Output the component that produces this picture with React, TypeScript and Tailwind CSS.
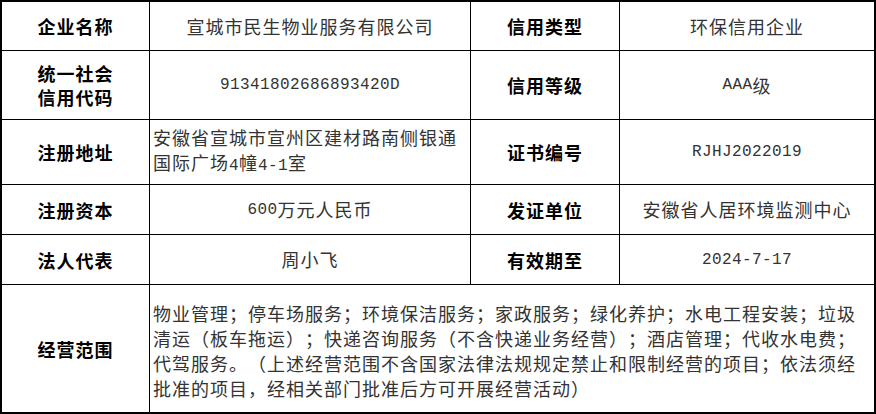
import React from 'react';

const M: React.FC<{ children: React.ReactNode }> = ({ children }) => (
    <span className="font-['Liberation_Mono',monospace] text-[16px] tracking-[0.4px]">{children}</span>
);

const Label: React.FC<{ children: React.ReactNode }> = ({ children }) => (
    <div className="flex items-center justify-center bg-white text-center text-[18px] leading-[24px] tracking-[1px] font-bold text-black">
        <div>{children}</div>
    </div>
);

const Value: React.FC<{ children: React.ReactNode }> = ({ children }) => (
    <div className="flex items-center justify-center bg-white text-center text-[18px] tracking-[1px] text-[#333] whitespace-nowrap">
        {children}
    </div>
);

const scopeLines = [
    '物业管理；停车场服务；环境保洁服务；家政服务；绿化养护；水电工程安装；垃圾',
    '清运（板车拖运）；快递咨询服务（不含快递业务经营）；酒店管理；代收水电费；',
    '代驾服务。（上述经营范围不含国家法律法规规定禁止和限制经营的项目；依法须经',
    '批准的项目，经相关部门批准后方可开展经营活动）',
];

export default function App() {
    return (
        <div className="w-[876px] h-[414px] bg-white font-['Noto_Sans_CJK_SC',sans-serif] [text-spacing-trim:space-all]">
            <div className="grid grid-cols-[147px_320px_148px_254px] grid-rows-[48px_68px_64px_49px_49px_127px] gap-px w-[876px] h-[414px] bg-black border-2 border-black">
                <Label>企业名称</Label>
                <Value>宣城市民生物业服务有限公司</Value>
                <Label>信用类型</Label>
                <Value>环保信用企业</Value>

                <Label>
                    统一社会
                    <br />
                    信用代码
                </Label>
                <Value><M>91341802686893420D</M></Value>
                <Label>信用等级</Label>
                <Value><M>AAA</M>级</Value>

                <Label>注册地址</Label>
                <div className="flex items-center bg-white pl-[3px] text-[18px] leading-[25px] tracking-[1px] text-[#333] whitespace-nowrap">
                    <div>
                        <div>安徽省宣城市宣州区建材路南侧银通</div>
                        <div>国际广场<M>4</M>幢<M>4-1</M>室</div>
                    </div>
                </div>
                <Label>证书编号</Label>
                <Value><M>RJHJ2022019</M></Value>

                <Label>注册资本</Label>
                <Value><M>600</M>万元人民币</Value>
                <Label>发证单位</Label>
                <Value>安徽省人居环境监测中心</Value>

                <Label>法人代表</Label>
                <Value>周小飞</Value>
                <Label>有效期至</Label>
                <Value><M>2024-7-17</M></Value>

                <Label>经营范围</Label>
                <div className="col-span-3 flex items-center bg-white pl-[3px] pt-[5px] text-[18px] leading-[25px] tracking-[1px] text-[#333] whitespace-nowrap">
                    <div>
                        {scopeLines.map(line => (
                            <div key={line}>{line}</div>
                        ))}
                    </div>
                </div>
            </div>
        </div>
    );
}
